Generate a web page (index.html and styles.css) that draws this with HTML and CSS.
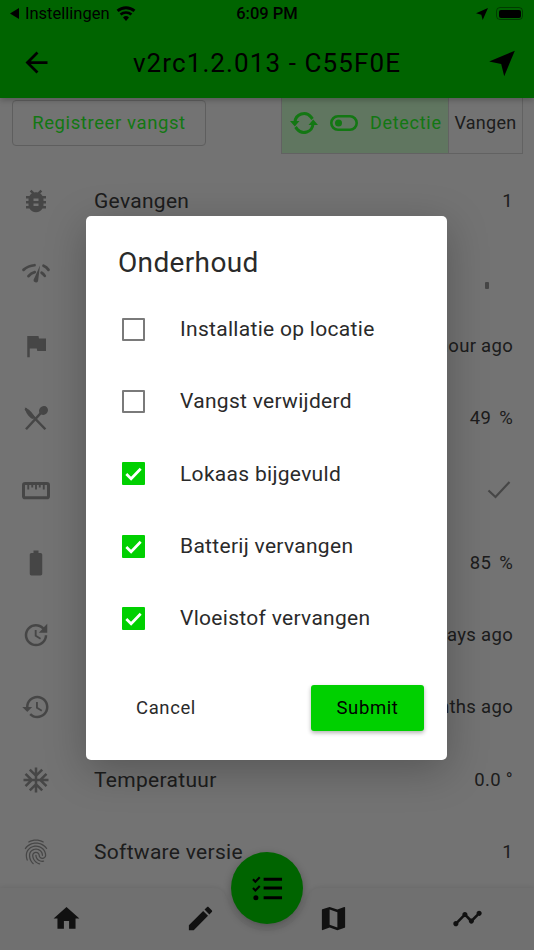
FILE: index.html
```html
<!doctype html>
<html lang="nl">
<head>
    <meta charset="UTF-8">
    <title>Onderhoud</title>
    <link rel="stylesheet" href="styles.css">
</head>
<body>
    <div class="screen">
        <div class="top">
            <div class="status">
                <div class="status-left">
                    <svg class="back-tri" viewBox="0 0 10 12"><path d="M10 0v12L0 6z"/></svg>
                    <span>Instellingen</span>
                    <svg class="wifi" viewBox="0 0 20 15"><path d="M10 15l-3-3.6a4.6 4.6 0 0 1 6 0z"/><path d="M5.4 9.5L3.700 7.500a9.600 9.600 0 0 1 12.600 0L14.600 9.500a7 7 0 0 0-9.200 0z"/><path d="M2.500 6L.6 3.800a14.300 14.300 0 0 1 18.800 0L17.500 6a11.400 11.400 0 0 0-15 0z"/></svg>
                </div>
                <span class="clock">6:09 PM</span>
                <div class="status-right">
                    <svg class="loc" viewBox="0 0 12 12"><path d="M12 0L0 5.300l5.300 1.400L6.700 12z"/></svg>
                    <div class="battery"><div class="battery-fill"></div></div>
                </div>
            </div>
            <div class="appbar">
                <svg class="back-icon" viewBox="0 0 24 24"><path d="M20 11H7.830l5.590-5.590L12 4l-8 8 8 8 1.410-1.410L7.830 13H20v-2z"/></svg>
                <h1>v2rc1.2.013 - C55F0E</h1>
                <svg class="appbar-icon" viewBox="0 0 24 24"><path d="M23 1.500L1 10.700l10.300 2.100 2.600 10.500z"/></svg>
            </div>
        </div>

        <div class="actions">
            <button class="register">Registreer vangst</button>
            <div class="mode">
                <div class="mode-on">
                    <svg class="sync" viewBox="0 0 28 24"><path d="M5 11a9 9 0 0 1 16-5l1.500 2M23 13a9 9 0 0 1-16 5l-1.500-2" fill="none" stroke="currentColor" stroke-width="3"/><path d="M0 10h9.500l-4.700 5.500zM28 14h-9.500l4.700-5.500z" fill="currentColor"/></svg>
                    <svg class="toggle" viewBox="0 0 28 16"><rect x="1.300" y="1.300" width="25.400" height="13.400" rx="6.700" fill="none" stroke="currentColor" stroke-width="2.600"/><circle cx="8.500" cy="8" r="3.500" fill="currentColor"/></svg>
                    <span>Detectie</span>
                </div>
                <div class="mode-off">Vangen</div>
            </div>
        </div>

        <div class="list">
            <div class="row">
                <svg class="icon" viewBox="0 0 24 24"><path d="M20 8h-2.810c-.45-.78-1.070-1.450-1.820-1.960L17 4.410 15.590 3l-2.170 2.170C12.960 5.060 12.490 5 12 5c-.49 0-.96.060-1.410.17L8.410 3 7 4.410l1.620 1.630C7.880 6.550 7.260 7.220 6.810 8H4v2h2.090c-.05.33-.09.66-.09 1v1H4v2h2v1c0 .34.04.67.09 1H4v2h2.810c1.040 1.790 2.970 3 5.190 3s4.150-1.210 5.190-3H20v-2h-2.090c.05-.33.09-.66.09-1v-1h2v-2h-2v-1c0-.34-.04-.67-.09-1H20V8zm-6 8h-4v-2h4v2zm0-4h-4v-2h4v2z"/></svg>
                <span class="label">Gevangen</span>
                <span class="value">1</span>
            </div>
            <div class="row">
                <svg class="icon" viewBox="0 0 24 24"><path d="M2 9.500C4.500 7.200 7.500 6 10.800 5.800M18 6.200C19.500 6.800 21 8 22 9.500M6 14.500c1.200-1.500 2.800-2.600 5-3.200M16.500 11.800c1 .6 1.800 1.400 2.500 2.500" fill="none" stroke="currentColor" stroke-width="2.200" stroke-linecap="round"/><path d="M15.200 6L13.600 18.500a1.900 1.900 0 0 1-3.600-1z"/></svg>
                <span class="label"></span>
                <span class="signal"></span>
            </div>
            <div class="row">
                <svg class="icon" viewBox="0 0 24 24"><path d="M14.400 6L14 4H5v17h2v-7h5.600l.4 2h7V6z"/></svg>
                <span class="label"></span>
                <span class="value">1 hour ago</span>
            </div>
            <div class="row">
                <svg class="icon" viewBox="0 0 24 24"><path d="M3.500 4.500L19.500 21M20 3.500L4 21" fill="none" stroke="currentColor" stroke-width="2"/><ellipse cx="18" cy="6" rx="3.800" ry="3.400" transform="rotate(-45 18 6)"/><path d="M3 3.500c3 1 6 4 8 7.500l-1.800 1.800C6 11 3.500 7.500 3 3.500z"/></svg>
                <span class="label"></span>
                <span class="value value-unit">49 %</span>
            </div>
            <div class="row">
                <svg class="icon" viewBox="0 0 24 24"><rect x="2" y="6.800" width="20" height="11.400" rx="1.300" fill="none" stroke="currentColor" stroke-width="2.400"/><path d="M5.800 7.500v4M9 7.500v2.500M12 7.500v4M15 7.500v2.500M18.200 7.500v4" stroke="currentColor" stroke-width="1.500"/></svg>
                <span class="label"></span>
                <svg class="tick" viewBox="0 0 24 24"><path d="M1.500 12.500l7 6.500L22.500 4" fill="none" stroke="currentColor" stroke-width="2.200"/></svg>
            </div>
            <div class="row">
                <svg class="icon" viewBox="0 0 24 24"><path d="M15.670 4H14V2h-4v2H8.330C7.600 4 7 4.600 7 5.330v15.330C7 21.400 7.600 22 8.330 22h7.330c.74 0 1.340-.6 1.340-1.330V5.330C17 4.600 16.400 4 15.670 4z"/></svg>
                <span class="label"></span>
                <span class="value value-unit">85 %</span>
            </div>
            <div class="row">
                <svg class="icon" viewBox="0 0 24 24"><path d="M21 10.120h-6.780l2.740-2.820c-2.730-2.700-7.150-2.800-9.880-.1-2.730 2.710-2.730 7.080 0 9.790s7.150 2.710 9.880 0C18.320 15.650 19 14.080 19 12.100h2c0 1.980-.88 4.550-2.640 6.290-3.510 3.480-9.210 3.480-12.720 0-3.500-3.470-3.530-9.110-.02-12.580s9.140-3.470 12.650 0L21 3v7.120zM12.500 8v4.250l3.500 2.080-.72 1.210L11 13V8h1.500z"/></svg>
                <span class="label"></span>
                <span class="value">3 days ago</span>
            </div>
            <div class="row">
                <svg class="icon" viewBox="0 0 24 24"><path d="M13 3c-4.970 0-9 4.030-9 9H1l3.890 3.890.07.14L9 12H6c0-3.870 3.130-7 7-7s7 3.130 7 7-3.130 7-7 7c-1.930 0-3.680-.79-4.940-2.060l-1.420 1.420C8.270 19.990 10.510 21 13 21c4.970 0 9-4.030 9-9s-4.030-9-9-9zm-1 5v5l4.280 2.540.72-1.210-3.500-2.080V8H12z"/></svg>
                <span class="label"></span>
                <span class="value">2 months ago</span>
            </div>
            <div class="row">
                <svg class="icon" viewBox="0 0 24 24"><path d="M22 11h-4.170l3.240-3.240-1.410-1.420L15 11h-2V9l4.660-4.660-1.420-1.410L13 6.170V2h-2v4.170L7.760 2.930 6.340 4.340 11 9v2H9L4.340 6.340 2.930 7.760 6.170 11H2v2h4.170l-3.240 3.240 1.410 1.420L9 13h2v2l-4.660 4.660 1.420 1.410L11 17.830V22h2v-4.170l3.240 3.240 1.420-1.410L13 15v-2h2l4.660 4.660 1.410-1.420L17.830 13H22z"/></svg>
                <span class="label">Temperatuur</span>
                <span class="value">0.0 °</span>
            </div>
            <div class="row">
                <svg class="icon" viewBox="0 0 24 24"><path d="M17.810 4.470c-.08 0-.16-.02-.23-.06C15.660 3.420 14 3 12.010 3c-1.980 0-3.860.47-5.570 1.410-.24.13-.54.04-.68-.2-.13-.24-.04-.55.2-.68C7.820 2.520 9.860 2 12.010 2c2.130 0 3.990.47 6.030 1.520.25.13.34.43.21.67-.09.18-.26.28-.44.28zM3.500 9.720c-.1 0-.2-.03-.29-.09-.23-.16-.28-.47-.12-.7.99-1.400 2.250-2.500 3.750-3.270C9.980 4.040 14 4.030 17.150 5.650c1.500.77 2.760 1.860 3.750 3.250.16.22.11.54-.12.7-.23.16-.54.11-.7-.12-.9-1.260-2.040-2.250-3.390-2.940-2.870-1.470-6.540-1.470-9.400.01-1.360.7-2.500 1.700-3.400 2.960-.08.14-.23.21-.39.21zm6.250 12.070c-.13 0-.26-.05-.35-.15-.87-.87-1.340-1.430-2.010-2.640-.69-1.230-1.050-2.730-1.050-4.340 0-2.970 2.540-5.390 5.660-5.390s5.660 2.420 5.660 5.390c0 .28-.22.5-.5.5s-.5-.22-.5-.5c0-2.420-2.090-4.390-4.660-4.390-2.570 0-4.660 1.970-4.660 4.390 0 1.440.32 2.770.93 3.850.64 1.150 1.080 1.640 1.850 2.420.19.2.19.51 0 .71-.11.1-.24.15-.37.15zm7.170-1.850c-1.190 0-2.240-.3-3.100-.89-1.490-1.010-2.380-2.650-2.380-4.390 0-.28.22-.5.5-.5s.5.22.5.5c0 1.410.72 2.740 1.940 3.560.71.48 1.540.71 2.540.71.24 0 .64-.03 1.040-.1.27-.05.53.13.58.41.05.27-.13.53-.41.58-.57.11-1.070.12-1.210.12zM14.910 22c-.04 0-.09-.01-.13-.02-1.590-.44-2.630-1.030-3.720-2.100-1.400-1.390-2.170-3.240-2.170-5.220 0-1.620 1.380-2.940 3.080-2.940 1.700 0 3.080 1.320 3.080 2.940 0 1.070.93 1.940 2.080 1.940s2.080-.87 2.080-1.940c0-3.770-3.250-6.830-7.250-6.830-2.840 0-5.440 1.580-6.610 4.030-.39.81-.59 1.760-.59 2.800 0 .78.07 2.010.67 3.610.1.26-.03.55-.29.64-.26.1-.55-.04-.64-.29-.49-1.310-.73-2.610-.73-3.960 0-1.200.23-2.290.68-3.240 1.330-2.790 4.280-4.600 7.510-4.600 4.550 0 8.250 3.510 8.250 7.830 0 1.620-1.380 2.940-3.080 2.940s-3.080-1.320-3.080-2.940c0-1.070-.93-1.940-2.080-1.940s-2.080.87-2.080 1.940c0 1.710.66 3.310 1.870 4.510.95.94 1.860 1.460 3.270 1.850.27.07.42.35.35.61-.05.23-.26.38-.47.38z"/></svg>
                <span class="label">Software versie</span>
                <span class="value">1</span>
            </div>
        </div>

        <div class="nav">
            <svg class="nav-bg" viewBox="0 0 534 62"><path d="M0 0H212C222 0 224 4 227 11A41 41 0 0 0 307 11C310 4 312 0 322 0H534V62H0z"/></svg>
            <div class="nav-item"><svg viewBox="0 0 24 24"><path d="M10 20v-6h4v6h5v-8h3L12 3 2 12h3v8z"/></svg></div>
            <div class="nav-item"><svg viewBox="0 0 24 24"><path d="M3 17.250V21h3.750L17.810 9.940l-3.750-3.750L3 17.250zM20.710 7.040c.39-.39.39-1.020 0-1.410l-2.340-2.340c-.39-.39-1.020-.39-1.410 0l-1.830 1.830 3.750 3.750 1.830-1.830z"/></svg></div>
            <div class="nav-item"><svg viewBox="0 0 24 24"><path d="M20.500 3l-.16.03L15 5.100 9 3 3.360 4.900c-.21.07-.36.25-.36.48V20.500c0 .28.22.5.5.5l.16-.03L9 18.900l6 2.100 5.640-1.900c.21-.07.36-.25.36-.48V3.500c0-.28-.22-.5-.5-.5zM15 19l-6-2.110V5l6 2.110V19z"/></svg></div>
            <div class="nav-item"><svg viewBox="0 0 24 24"><path d="M23 8c0 1.100-.9 2-2 2-.18 0-.35-.02-.51-.07l-3.560 3.550c.05.16.07.34.07.52 0 1.100-.9 2-2 2s-2-.9-2-2c0-.18.02-.36.07-.52l-2.550-2.550c-.16.05-.34.07-.52.07s-.36-.02-.52-.07l-4.550 4.560c.05.16.07.33.07.51 0 1.100-.9 2-2 2s-2-.9-2-2 .9-2 2-2c.18 0 .35.02.51.07l4.560-4.550C8.020 9.360 8 9.180 8 9c0-1.100.9-2 2-2s2 .9 2 2c0 .18-.02.36-.07.52l2.550 2.550c.16-.05.34-.07.52-.07s.36.02.52.07l3.550-3.560C19.020 8.350 19 8.180 19 8c0-1.100.9-2 2-2s2 .9 2 2z"/></svg></div>
            <div class="fab">
                <svg viewBox="0 0 32 26"><path d="M1 4l2.500 2.500L8 2M1 13l2.500 2.500L8 11" fill="none" stroke="currentColor" stroke-width="2.200"/><circle cx="4" cy="23" r="2.600"/><path d="M12 2.500h19v3H12zM12 11.500h19v3H12zM12 21.500h19v3H12z"/></svg>
            </div>
        </div>

        <div class="scrim">
            <div class="dialog">
                <h2>Onderhoud</h2>
                <div class="check-list">
                    <label class="check"><span class="box"></span>Installatie op locatie</label>
                    <label class="check"><span class="box"></span>Vangst verwijderd</label>
                    <label class="check"><span class="box box-on"><svg viewBox="0 0 24 24"><path d="M4.500 12.500l5 5 10-10.500" fill="none" stroke="currentColor" stroke-width="2.800"/></svg></span>Lokaas bijgevuld</label>
                    <label class="check"><span class="box box-on"><svg viewBox="0 0 24 24"><path d="M4.500 12.500l5 5 10-10.500" fill="none" stroke="currentColor" stroke-width="2.800"/></svg></span>Batterij vervangen</label>
                    <label class="check"><span class="box box-on"><svg viewBox="0 0 24 24"><path d="M4.500 12.500l5 5 10-10.500" fill="none" stroke="currentColor" stroke-width="2.800"/></svg></span>Vloeistof vervangen</label>
                </div>
                <div class="dialog-actions">
                    <button class="cancel">Cancel</button>
                    <button class="submit">Submit</button>
                </div>
            </div>
        </div>
    </div>
</body>
</html>
```

FILE: styles.css
```css
body {
    margin: 0;
    font-family: Roboto, "Liberation Sans", sans-serif;
    background-color: #e6e6e6;
    color: #3a3a3a;
}

.screen {
    position: relative;
    display: flex;
    flex-direction: column;
    width: 534px;
    height: 950px;
    overflow: hidden;
}

.top {
    position: relative;
    z-index: 1;
    height: 98px;
    background-color: #00c800;
    color: #000;
    box-shadow: 0px 2px 6px rgba(0, 0, 0, 0.25);
}

.status {
    display: grid;
    grid-template-columns: 1fr auto 1fr;
    align-items: center;
    height: 27px;
    padding: 0 10px;
    font-size: 16.500px;
}

.status-left {
    display: flex;
    align-items: center;
    gap: 4px;
}

.back-tri {
    width: 9px;
    height: 11px;
    margin-right: 2px;
}

.wifi {
    width: 20px;
    height: 15px;
    margin-left: 2px;
}

.clock {
    font-weight: 500;
}

.status-right {
    display: flex;
    justify-content: flex-end;
    align-items: center;
    gap: 8px;
    padding-right: 1px;
}

.loc {
    width: 12px;
    height: 12px;
}

.battery {
    width: 27px;
    height: 13px;
    padding: 1.500px;
    border: 1px solid rgba(0, 0, 0, 0.4);
    border-radius: 4px;
    box-sizing: border-box;
}

.battery-fill {
    height: 100%;
    background-color: #000;
    border-radius: 2px;
}

.appbar {
    display: flex;
    align-items: center;
    justify-content: space-between;
    height: 71px;
    padding: 0 18px 0 20px;
}

.appbar h1 {
    margin: 0 7px 0 0;
    font-size: 26px;
    font-weight: 400;
    letter-spacing: 1.100px;
}

.back-icon {
    width: 33px;
    height: 33px;
}

.appbar-icon {
    width: 28px;
    height: 28px;
}

.actions {
    display: flex;
    justify-content: space-between;
    align-items: flex-start;
    height: 56px;
    margin-bottom: 11px;
    padding: 0 11px 0 12px;
}

.register {
    width: 194px;
    height: 46px;
    margin-top: 2px;
    padding: 0;
    font: 400 18.500px Roboto, sans-serif;
    letter-spacing: 0.6px;
    color: #26ef26;
    background: none;
    border: 1px solid #bdbdbd;
    border-radius: 4px;
}

.mode {
    display: flex;
    width: 242px;
    height: 56px;
    box-sizing: border-box;
    border: 1px solid #c4c4c4;
    border-top: none;
    font-size: 18px;
    letter-spacing: 0.3px;
}

.mode-on {
    display: flex;
    align-items: center;
    width: 167px;
    padding: 0 0 6px 8px;
    box-sizing: border-box;
    color: #26ef26;
    background-color: #c0ecc0;
    border-right: 1px solid #c4c4c4;
    letter-spacing: 0.7px;
}

.mode-off {
    display: flex;
    flex: 1;
    align-items: center;
    justify-content: center;
    padding-bottom: 6px;
}

.sync {
    width: 28px;
    height: 24px;
}

.toggle {
    width: 28px;
    height: 16px;
    margin: 0 12px;
}

.list {
    flex: 1;
}

.row {
    display: flex;
    align-items: center;
    height: 72.300px;
    padding: 0 21px 0 21px;
    font-size: 21px;
    letter-spacing: 0.3px;
}

.icon {
    flex: none;
    width: 30px;
    height: 30px;
    margin-right: 43px;
    fill: #8c8c8c;
    color: #8c8c8c;
}

.label {
    flex: 1;
}

.value {
    font-size: 18.500px;
}

.value-unit {
    word-spacing: 3px;
}

.signal {
    width: 4px;
    height: 7px;
    margin: 24px 24px 0 0;
    background-color: #8c8c8c;
    border-radius: 1px;
}

.tick {
    width: 24px;
    height: 24px;
    margin-right: 2px;
    color: #8c8c8c;
}

.nav {
    position: relative;
    display: flex;
    height: 62px;
}

.nav-bg {
    position: absolute;
    top: 0;
    left: 0;
    width: 534px;
    height: 62px;
    fill: #e0e0e0;
    filter: drop-shadow(0px -1px 2px rgba(0, 0, 0, 0.08));
}

.nav-item {
    position: relative;
    display: flex;
    flex: 1;
    justify-content: center;
    padding-top: 15px;
}

.nav-item svg {
    width: 31px;
    height: 31px;
    fill: #222;
}

.fab {
    position: absolute;
    top: -36px;
    left: 231px;
    display: flex;
    align-items: center;
    justify-content: center;
    width: 72px;
    height: 72px;
    border-radius: 50%;
    background-color: #00c800;
    color: #000;
    box-shadow: 0px 3px 8px rgba(0, 0, 0, 0.3);
}

.fab svg {
    width: 31px;
    height: 26px;
}

.scrim {
    position: absolute;
    top: 0;
    left: 0;
    z-index: 2;
    display: flex;
    align-items: center;
    justify-content: center;
    width: 534px;
    height: 950px;
    padding: 26px 1px 0 0;
    box-sizing: border-box;
    background-color: rgba(0, 0, 0, 0.5);
}

.dialog {
    display: flex;
    flex-direction: column;
    width: 361px;
    height: 544px;
    background-color: #fff;
    border-radius: 5px;
    box-shadow: 0px 10px 40px rgba(0, 0, 0, 0.25);
    color: #2a2a2a;
}

.dialog h2 {
    height: 77px;
    margin: 0;
    padding: 0 32px;
    font-size: 28px;
    font-weight: 400;
    line-height: 94px;
    letter-spacing: 0.35px;
    box-sizing: border-box;
}

.check {
    display: flex;
    align-items: center;
    height: 72.300px;
    padding-left: 36px;
    font-size: 21px;
    letter-spacing: 0.3px;
}

.box {
    flex: none;
    display: block;
    width: 23px;
    height: 23px;
    margin-right: 35px;
    box-sizing: border-box;
    border: 2.500px solid #7a7a7a;
    border-radius: 1px;
}

.box-on {
    background-color: #00d000;
    border: none;
    color: #fff;
}

.box-on svg {
    display: block;
}

.dialog-actions {
    display: flex;
    align-items: center;
    justify-content: space-between;
    height: 46px;
    margin-top: 31px;
    padding: 0 23px 0 32px;
}

.cancel, .submit {
    height: 46px;
    padding: 0;
    font: 400 18.500px Roboto, sans-serif;
    letter-spacing: 0.6px;
    color: #2a2a2a;
    background: none;
    border: none;
}

.cancel {
    width: 96px;
}

.submit {
    width: 113px;
    color: #000;
    background-color: #00d000;
    border-radius: 3px;
    box-shadow: 0px 2px 4px rgba(0, 0, 0, 0.3);
}
```
